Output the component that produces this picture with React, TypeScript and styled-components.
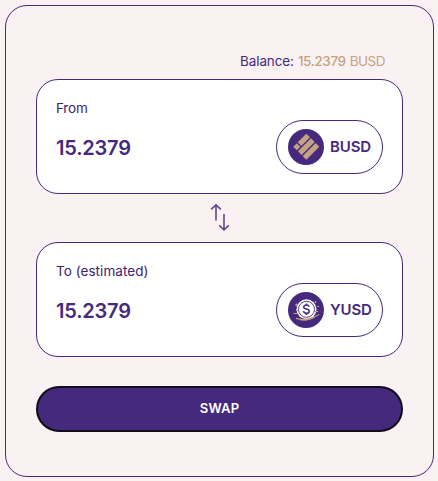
import React from "react";
import styled, { createGlobalStyle } from "styled-components";

const purple = "#45297d";
const tan = "#c5a283";

const GlobalStyle = createGlobalStyle`
  * { box-sizing: border-box; }
  body {
    margin: 0;
    background: #faf1f3;
    color: ${purple};
    font-family: Inter, "Liberation Sans", sans-serif;
  }
`;

const Page = styled.main`
  padding: 5px 4px 4px 5px;
  height: 481px;
`;

const Card = styled.section`
  display: flex;
  flex-direction: column;
  height: 472px;
  padding: 45px 30px 0;
  border: 1px solid ${purple};
  border-radius: 22px;
`;

const Balance = styled.div`
  display: flex;
  justify-content: flex-end;
  gap: 4px;
  height: 28px;
  padding-right: 18px;
  font-size: 13.5px;
  line-height: 20px;
`;

const BalanceLabel = styled.span`
  letter-spacing: -0.1px;
`;

const Amount = styled.span<{ $strong?: boolean }>`
  color: ${tan};
  font-weight: ${(p) => (p.$strong ? 500 : 400)};
  letter-spacing: ${(p) => (p.$strong ? "-0.4px" : "-0.5px")};
`;

const Panel = styled.div`
  display: flex;
  justify-content: space-between;
  height: 115px;
  flex: none;
  padding: 18px 19px 0;
  background: #fff;
  border: 1px solid ${purple};
  border-radius: 22px;
`;

const Field = styled.div`
  display: flex;
  flex-direction: column;
  gap: 17px;
`;

const Label = styled.span<{ $spacing: number }>`
  color: #3b2270;
  font-size: 13.5px;
  font-weight: 400;
  line-height: 20px;
  letter-spacing: ${(p) => p.$spacing}px;
`;

const Value = styled.span`
  font-size: 20px;
  font-weight: 600;
  line-height: 26px;
  letter-spacing: -0.2px;
`;

const Token = styled.button`
  display: flex;
  align-items: center;
  gap: 6px;
  width: 107px;
  height: 54px;
  margin-top: 22px;
  padding: 0 0 0 11px;
  background: #fff;
  border: 1px solid ${purple};
  border-radius: 27px;
  color: ${purple};
  font: 600 15px/20px Inter, sans-serif;
  letter-spacing: -0.15px;
`;

const TokenIcon = styled.svg`
  width: 36px;
  height: 36px;
  flex: none;
`;

const SwitchRow = styled.div`
  display: flex;
  justify-content: center;
  align-items: center;
  flex: none;
  height: 48px;
`;

const SwapButton = styled.button`
  flex: none;
  height: 46px;
  margin-top: 29px;
  padding: 0 0 2px;
  background: ${purple};
  border: 2px solid #120c18;
  border-radius: 23px;
  color: #fff;
  font: 600 13px/20px Inter, sans-serif;
  letter-spacing: 0.2px;
`;

const BusdIcon = () => (
  <TokenIcon viewBox="0 0 36 36">
    <circle cx="18" cy="18" r="18" fill={purple} />
    <g fill={tan} transform="translate(18.3 17.7) rotate(-45)">
      <rect x="-9.2" y="-9.2" width="5" height="5" />
      <rect x="-3" y="-9.2" width="12.2" height="5.2" />
      <rect x="-9.2" y="-2.6" width="18.4" height="5.2" />
      <rect x="-9.2" y="4" width="18.4" height="5.2" />
    </g>
  </TokenIcon>
);

const YusdIcon = () => (
  <TokenIcon viewBox="0 0 36 36">
    <circle cx="18" cy="18" r="18" fill={purple} />
    <circle cx="18.5" cy="17.3" r="10" fill="#fff" />
    <circle cx="18.5" cy="17.3" r="8" fill="#fff" stroke={purple} strokeWidth=".9" />
    <path
      d="M21.1 14.9c-.3-1.2-1.3-1.8-2.7-1.8-1.6 0-2.7.8-2.7 2 0 2.7 5.5 1.3 5.5 4.1 0 1.3-1.2 2.1-2.8 2.1-1.7 0-2.7-.8-2.9-2.1M18.5 11.5v1.8M18.5 21v2"
      fill="none"
      stroke={purple}
      strokeWidth="1.5"
    />
    <path
      d="M8 26.4c7 1.8 15 1 23.2-4M12 27.8c5 .8 11-.4 15-3M8.5 14.5v-3M7 13h3M5.5 21.5h4M8 18.5h2M29 14.5h2M27.5 9v2M27 19.5h3"
      fill="none"
      stroke={tan}
      strokeWidth="1.1"
    />
  </TokenIcon>
);

const SwitchIcon = () => (
  <svg width="20" height="28" viewBox="0 0 20 28" fill="none" stroke={purple} strokeOpacity=".85" strokeWidth="1.6">
    <path d="M6 16.5V1M1.2 5.3 6 .9l4.8 4.4M14 10v16M9.2 21.4l4.8 4.6 4.8-4.6" />
  </svg>
);

interface SwapFieldProps {
  label: string;
  spacing: number;
  token: string;
  icon: React.ReactNode;
}

const SwapField = ({ label, spacing, token, icon }: SwapFieldProps) => (
  <Panel>
    <Field>
      <Label $spacing={spacing}>{label}</Label>
      <Value>15.2379</Value>
    </Field>
    <Token>
      {icon}
      {token}
    </Token>
  </Panel>
);

export default function App() {
  return (
    <>
      <GlobalStyle />
      <Page>
        <Card>
          <Balance>
            <BalanceLabel>Balance:</BalanceLabel>
            <Amount $strong>15.2379</Amount>
            <Amount>BUSD</Amount>
          </Balance>
          <SwapField label="From" spacing={-0.2} token="BUSD" icon={<BusdIcon />} />
          <SwitchRow>
            <SwitchIcon />
          </SwitchRow>
          <SwapField label="To (estimated)" spacing={0.05} token="YUSD" icon={<YusdIcon />} />
          <SwapButton>SWAP</SwapButton>
        </Card>
      </Page>
    </>
  );
}
